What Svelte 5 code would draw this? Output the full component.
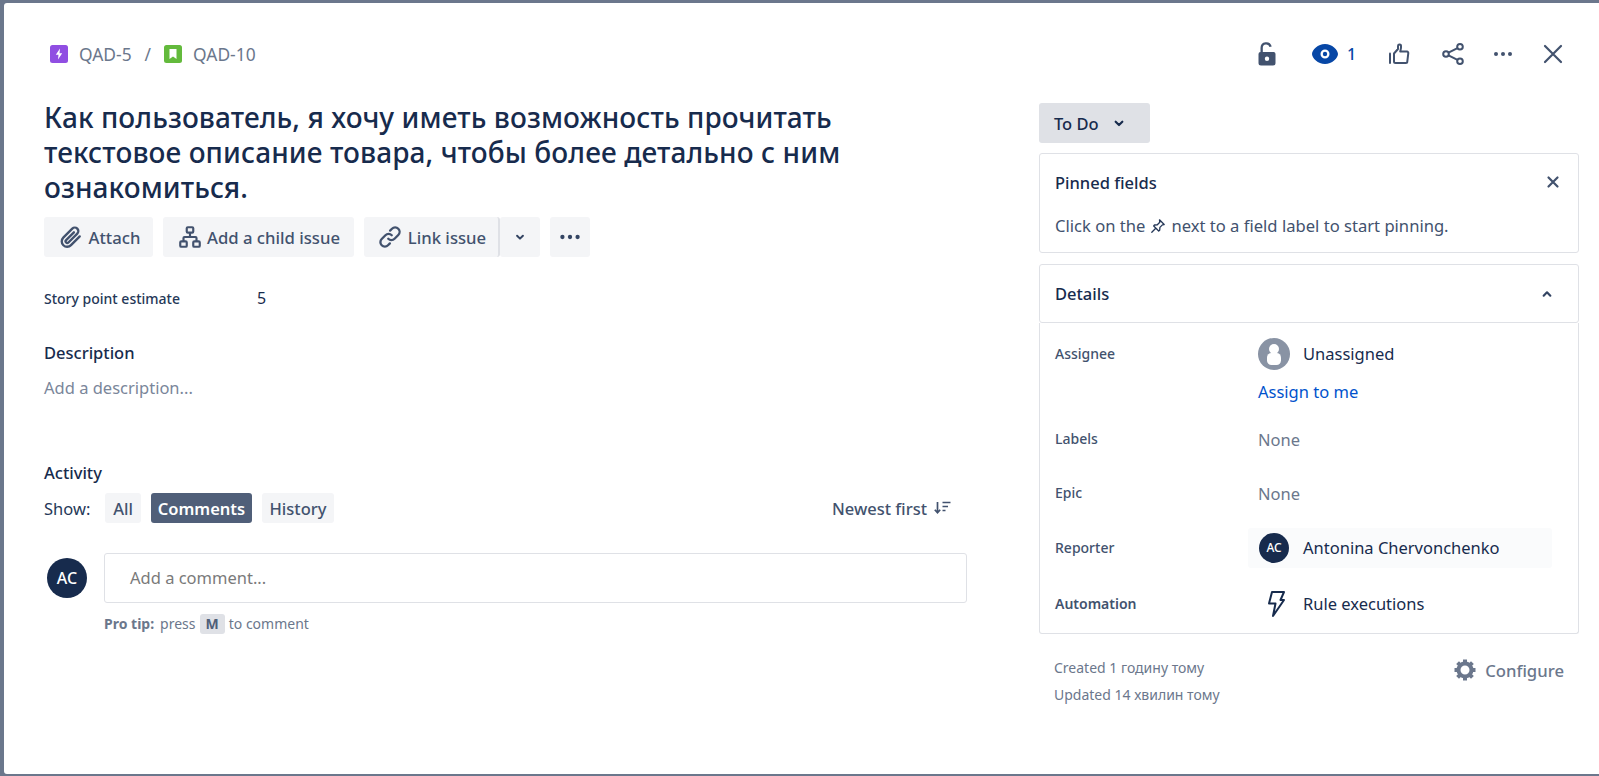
<script lang="ts">
	const actions = [
		{ label: 'Attach', icon: 'attach' },
		{ label: 'Add a child issue', icon: 'child' }
	];

	const filters = [
		{ label: 'All', active: false },
		{ label: 'Comments', active: true },
		{ label: 'History', active: false }
	];

	const gearTeeth = [0, 45, 90, 135, 180, 225, 270, 315];
</script>

<div class="backdrop">
	<div class="modal">
		<main class="left">
			<nav class="crumbs">
				<svg class="type" viewBox="0 0 18 18" width="18" height="18">
					<rect width="18" height="18" rx="2.5" fill="#904ee2" />
					<path d="M10 3.5 5.8 9.8h2.700L8 14.500l4.200-6.300H9.500z" fill="#fff" />
				</svg>
				<span>QAD-5</span>
				<span class="slash">/</span>
				<svg class="type" viewBox="0 0 18 18" width="18" height="18">
					<rect width="18" height="18" rx="2.5" fill="#63ba3c" />
					<path d="M5.500 4h7v10L9 11.400 5.500 14z" fill="#fff" />
				</svg>
				<span>QAD-10</span>
			</nav>

			<h1>Как пользователь, я хочу иметь возможность прочитать текстовое описание товара, чтобы более детально с ним ознакомиться.</h1>

			<div class="actions">
				{#each actions as action}
					<button class="btn {action.icon}">
						{#if action.icon === 'attach'}
							<svg viewBox="0 0 24 24" width="28" height="28" fill="none" stroke="#42526e" stroke-width="2" stroke-linecap="round">
								<path d="M19.500 11.500 12 19a4.600 4.600 0 0 1-6.600-6.500l7.700-7.700a3 3 0 0 1 4.300 4.300l-7.600 7.600a1.400 1.400 0 0 1-2-2L14.500 8" />
							</svg>
						{:else}
							<svg viewBox="0 0 24 24" width="26" height="26" fill="none" stroke="#42526e" stroke-width="2">
								<rect x="9" y="3" width="6" height="5" rx="1" />
								<rect x="3" y="16" width="6" height="5" rx="1" />
								<rect x="15" y="16" width="6" height="5" rx="1" />
								<path d="M12 8v4M6 16v-3a1 1 0 0 1 1-1h10a1 1 0 0 1 1 1v3" />
							</svg>
						{/if}
						{action.label}
					</button>
				{/each}
				<div class="split">
					<button class="btn link">
						<svg viewBox="0 0 24 24" width="28" height="28" fill="none" stroke="#42526e" stroke-width="2" stroke-linecap="round">
							<path d="M10.500 13.500a3.800 3.800 0 0 0 5.400 0l3.200-3.200a3.800 3.800 0 0 0-5.400-5.400l-1.600 1.600" />
							<path d="M13.500 10.500a3.800 3.800 0 0 0-5.400 0l-3.200 3.200a3.800 3.800 0 0 0 5.400 5.400l1.600-1.600" />
						</svg>
						Link issue
					</button>
					<button class="btn square">
						<svg viewBox="0 0 24 24" width="20" height="20" fill="none" stroke="#344563" stroke-width="2.400" stroke-linecap="round" stroke-linejoin="round">
							<path d="m8.500 10.500 3.500 3.500 3.500-3.500" />
						</svg>
					</button>
				</div>
				<button class="btn square more">
					<svg viewBox="0 0 24 24" width="26" height="26" fill="#344563">
						<circle cx="5" cy="12" r="2" /><circle cx="12" cy="12" r="2" /><circle cx="19" cy="12" r="2" />
					</svg>
				</button>
			</div>

			<div class="estimate">
				<span class="estimate-label">Story point estimate</span>
				<span class="estimate-value">5</span>
			</div>

			<h2 class="desc-head">Description</h2>
			<p class="placeholder">Add a description...</p>

			<h2 class="activity-head">Activity</h2>
			<div class="show">
				<span class="show-label">Show:</span>
				{#each filters as f}
					<button class="filter" class:active={f.active}>{f.label}</button>
				{/each}
				<span class="sort">
					Newest first
					<svg viewBox="0 0 18 16" width="18" height="16" fill="none" stroke="#42526e" stroke-width="1.700">
						<path d="M4.500 2v10.500M1.800 9.800l2.700 3 2.700-3" />
						<path d="M9.500 2.500h8M9.500 6.500h5.500M9.500 10.500h3" />
					</svg>
				</span>
			</div>

			<div class="comment">
				<div class="avatar">AC</div>
				<div class="comment-body">
					<div class="comment-input">Add a comment...</div>
					<p class="tip"><b>Pro tip:</b> press <kbd>M</kbd> to comment</p>
				</div>
			</div>
		</main>

		<aside class="right">
			<div class="toolbar">
				<svg class="t-lock" viewBox="0 0 20 26" width="20" height="26" fill="#42526e">
					<path fill-rule="evenodd" d="M3.500 11V7a5.700 5.700 0 0 1 11.200-1.500l-2.200.6A3.400 3.400 0 0 0 5.800 7v4H17a2 2 0 0 1 1.500 2v9a2.500 2.500 0 0 1-2.500 2.500H4A2.500 2.500 0 0 1 1.500 22v-9a2 2 0 0 1 2-2zM10 15.500a2.200 2.200 0 1 0 0 4.400 2.200 2.200 0 0 0 0-4.400z" />
				</svg>
				<span class="watch">
					<svg viewBox="0 0 26 20" width="26" height="20">
						<path fill-rule="evenodd" fill="#0747a6" d="M13 0c7 0 13 6 13 10s-6 10-13 10S0 14 0 10 6 0 13 0zm0 5.500a4.500 4.500 0 1 0 0 9 4.500 4.500 0 0 0 0-9z" />
						<circle cx="13" cy="10" r="2.200" fill="#0747a6" />
					</svg>
					<span>1</span>
				</span>
				<svg class="t-thumb" viewBox="0 0 24 24" width="24" height="24" fill="none" stroke="#42526e" stroke-width="2" stroke-linejoin="round" stroke-linecap="round">
					<path d="M3 11.500V21" />
					<path d="M7 11.500 11 7V4a1.500 1.500 0 0 1 3 .2c.3 2-.4 3.800-.8 5.300H20a1.500 1.500 0 0 1 1.300 1.700l-1 8.300a1.500 1.500 0 0 1-1.500 1.500H8.500A1.500 1.500 0 0 1 7 19.500z" />
				</svg>
				<svg class="t-share" viewBox="0 0 24 24" width="24" height="24" fill="none" stroke="#42526e" stroke-width="2">
					<circle cx="5" cy="12" r="2.800" /><circle cx="19" cy="4.800" r="2.800" /><circle cx="19" cy="19.200" r="2.800" />
					<path d="m7.500 10.700 9-4.600M7.500 13.300l9 4.600" />
				</svg>
				<svg class="t-dots" viewBox="0 0 24 24" width="24" height="24" fill="#42526e">
					<circle cx="5" cy="12" r="2" /><circle cx="12" cy="12" r="2" /><circle cx="19" cy="12" r="2" />
				</svg>
				<svg class="t-close" viewBox="0 0 24 24" width="24" height="24" fill="none" stroke="#42526e" stroke-width="2.200" stroke-linecap="round">
					<path d="m4 4 16 16M20 4 4 20" />
				</svg>
			</div>

			<button class="status">
				To Do
				<svg viewBox="0 0 24 24" width="20" height="20" fill="none" stroke="#172b4d" stroke-width="2.600" stroke-linecap="round" stroke-linejoin="round">
					<path d="m8 10.500 4 4 4-4" />
				</svg>
			</button>

			<section class="panel pinned">
				<div class="panel-head">
					<span>Pinned fields</span>
					<svg viewBox="0 0 14 14" width="14" height="14" fill="none" stroke="#42526e" stroke-width="2.200" stroke-linecap="round">
						<path d="m2.500 2.500 9 9M11.500 2.500l-9 9" />
					</svg>
				</div>
				<p class="pinned-text">
					Click on the
					<svg viewBox="0 0 16 16" width="16" height="16" fill="none" stroke="#253858" stroke-width="1.300" stroke-linejoin="round" stroke-linecap="round">
						<path d="m9.500 1.800 4.700 4.700-1.800.4-2.500 2.500-.2 2.800-1 .8-5-5 .8-1 2.800-.2 2.500-2.500zM5.500 10.500 1.800 14.200" />
					</svg>
					next to a field label to start pinning.
				</p>
			</section>

			<section class="details">
				<div class="details-head">
					<span>Details</span>
					<svg viewBox="0 0 24 24" width="20" height="20" fill="none" stroke="#344563" stroke-width="2.600" stroke-linecap="round" stroke-linejoin="round">
						<path d="m8 14 4-4 4 4" />
					</svg>
				</div>
				<div class="details-body">
					<div class="row assignee">
						<span class="label">Assignee</span>
						<div class="value">
							<div class="person">
								<svg viewBox="0 0 32 32" width="32" height="32">
									<circle cx="16" cy="16" r="16" fill="#8993a4" />
									<circle cx="16" cy="11" r="5" fill="#fff" />
									<rect x="9" y="15" width="14" height="12" rx="4.500" fill="#fff" />
								</svg>
								<span>Unassigned</span>
							</div>
							<span class="assign-me">Assign to me</span>
						</div>
					</div>
					<div class="row labels">
						<span class="label">Labels</span>
						<span class="none">None</span>
					</div>
					<div class="row epic">
						<span class="label">Epic</span>
						<span class="none">None</span>
					</div>
					<div class="row reporter">
						<span class="label">Reporter</span>
						<div class="person reporter-chip">
							<div class="avatar small">AC</div>
							<span>Antonina Chervonchenko</span>
						</div>
					</div>
					<div class="row automation">
						<span class="label bold">Automation</span>
						<div class="person">
							<svg class="bolt" viewBox="0 0 24 32" width="32" height="32" fill="none" stroke="#172b4d" stroke-width="2" stroke-linejoin="round">
								<path d="M8 4h12l-3.500 8H20L9 28l2.500-12.500H5z" />
							</svg>
							<span>Rule executions</span>
						</div>
					</div>
				</div>
			</section>

			<div class="meta">
				<div class="dates">
					<span>Created 1 годину тому</span>
					<span>Updated 14 хвилин тому</span>
				</div>
				<div class="configure">
					<svg viewBox="0 0 24 24" width="24" height="24" fill="none" stroke="#6b778c">
						<circle cx="12" cy="12" r="6.500" stroke-width="4" />
						{#each gearTeeth as deg}
							<path d="M12 1.500v4" stroke-width="4" transform="rotate({deg} 12 12)" />
						{/each}
					</svg>
					Configure
				</div>
			</div>
		</aside>
	</div>
</div>

<style>
	:global(body) {
		margin: 0;
		background: #6b778c;
		font-family: "Noto Sans", sans-serif;
		color: #172b4d;
	}

	.backdrop {
		height: 776px;
		box-sizing: border-box;
		padding: 3px 0 2px 4px;
		overflow: hidden;
		background: #6b778c;
	}

	.modal {
		display: flex;
		height: 100%;
		background: #fff;
		border-radius: 3px 0 0 3px;
	}

	.left {
		width: 924px;
		padding-left: 40px;
		flex-shrink: 0;
	}

	.crumbs {
		display: flex;
		align-items: center;
		height: 18px;
		margin: 42px 0 0 6px;
		font-size: 17.4px;
		color: #6b778c;
	}

	.crumbs .type {
		margin-right: 11px;
	}

	.slash {
		margin: 0 13px;
	}

	h1 {
		width: 830px;
		margin: 37px 0 0;
		font-size: 28px;
		letter-spacing: 0.1px;
		line-height: 35px;
		font-weight: 500;
		color: #172b4d;
	}

	.actions {
		display: flex;
		gap: 10px;
		margin-top: 12px;
	}

	.btn {
		display: flex;
		align-items: center;
		justify-content: center;
		gap: 4px;
		box-sizing: border-box;
		height: 40px;
		padding: 0;
		border: none;
		border-radius: 3px;
		background: #f4f5f7;
		color: #42526e;
		font: 500 16.7px "Noto Sans", sans-serif;
	}

	.btn.attach { width: 109px; }
	.btn.child { width: 191px; }

	.split {
		display: flex;
		gap: 0;
	}

	.btn.link {
		width: 136px;
		border-right: 2px solid #dfe1e6;
	}

	.btn.square {
		width: 40px;
	}

	.estimate {
		display: flex;
		align-items: center;
		margin-top: 31px;
		height: 20px;
		font-size: 14px;
		font-weight: 500;
		color: #253858;
	}

	.estimate-label {
		width: 213px;
	}

	.estimate-value {
		font-size: 16px;
		font-weight: 400;
		color: #172b4d;
	}

	h2 {
		margin: 0;
		font-size: 16.5px;
		line-height: 22px;
		font-weight: 500;
		color: #172b4d;
	}

	.desc-head {
		margin-top: 34px;
	}

	.placeholder {
		margin: 13px 0 0;
		font-size: 16.5px;
		line-height: 22px;
		color: #7a869a;
	}

	.activity-head {
		margin-top: 63px;
	}

	.show {
		display: flex;
		align-items: center;
		gap: 10px;
		width: 907px;
		margin-top: 9px;
	}

	.show-label {
		width: 51px;
		font-size: 16.5px;
		color: #253858;
	}

	.filter {
		height: 30px;
		padding: 0;
		border: none;
		border-radius: 3px;
		background: #f4f5f7;
		color: #42526e;
		font: 500 16.5px "Noto Sans", sans-serif;
	}

	.filter:nth-of-type(1) { width: 36px; }
	.filter:nth-of-type(2) { width: 101px; }
	.filter:nth-of-type(3) { width: 72px; }

	.filter.active {
		background: #505f79;
		color: #fff;
		font-weight: 600;
	}

	.sort {
		display: flex;
		align-items: center;
		gap: 6px;
		margin-left: auto;
		font-size: 16.5px;
		font-weight: 500;
		color: #42526e;
	}

	.comment {
		display: flex;
		gap: 17px;
		margin-top: 30px;
		padding-left: 3px;
	}

	.avatar {
		display: flex;
		align-items: center;
		justify-content: center;
		flex-shrink: 0;
		width: 40px;
		height: 40px;
		margin-top: 5px;
		border-radius: 50%;
		background: #172b4d;
		color: #fff;
		font-size: 16px;
		font-weight: 500;
	}

	.avatar.small {
		width: 30px;
		height: 30px;
		margin: 0 1px;
		font-size: 12px;
	}

	.comment-body {
		width: 863px;
	}

	.comment-input {
		box-sizing: border-box;
		height: 50px;
		padding: 0 25px;
		border: 1px solid #dfe1e6;
		border-radius: 3px;
		line-height: 48px;
		font-size: 16.5px;
		color: #7a7a7a;
	}

	.tip {
		display: flex;
		align-items: center;
		gap: 4px;
		margin: 10px 0 0;
		font-size: 14px;
		line-height: 22px;
		color: #6b778c;
	}

	.tip b {
		margin-right: 2px;
	}

	kbd {
		padding: 0 6px;
		border-radius: 3px;
		background: #dfe1e6;
		color: #505f79;
		font: 700 14px/20px "Noto Sans", sans-serif;
	}

	.right {
		width: 540px;
		margin-left: 71px;
	}

	.toolbar {
		display: flex;
		align-items: center;
		height: 30px;
		margin-top: 36px;
		padding-left: 218px;
	}

	.watch {
		display: flex;
		align-items: center;
		gap: 9px;
		margin-left: 35px;
		color: #0747a6;
		font-size: 16px;
		font-weight: 500;
	}

	.t-thumb { margin-left: 31px; }
	.t-share { margin-left: 30px; }
	.t-dots { margin-left: 26px; }
	.t-close { margin-left: 26px; }

	.status {
		display: flex;
		align-items: center;
		gap: 10px;
		width: 111px;
		height: 40px;
		margin-top: 34px;
		padding: 0 15px;
		border: none;
		border-radius: 3px;
		background: #dfe1e6;
		color: #172b4d;
		font: 500 16.5px "Noto Sans", sans-serif;
	}

	.panel {
		box-sizing: border-box;
		height: 100px;
		margin-top: 10px;
		padding: 0 18px 0 15px;
		border: 1px solid #dfe1e6;
		border-radius: 3px;
	}

	.panel-head {
		display: flex;
		align-items: center;
		justify-content: space-between;
		height: 56px;
		font-size: 16.5px;
		font-weight: 500;
	}

	.pinned-text {
		display: flex;
		align-items: center;
		gap: 5px;
		margin: 5px 0 0;
		font-size: 16.6px;
		line-height: 22px;
		color: #42526e;
	}

	.details {
		margin-top: 11px;
	}

	.details-head {
		display: flex;
		align-items: center;
		justify-content: space-between;
		box-sizing: border-box;
		height: 59px;
		padding: 0 21px 0 15px;
		border: 1px solid #dfe1e6;
		border-radius: 3px;
		font-size: 16.5px;
		font-weight: 500;
	}

	.details-body {
		box-sizing: border-box;
		height: 311px;
		padding: 0 15px;
		border: 1px solid #dfe1e6;
		border-top: none;
		border-radius: 0 0 3px 3px;
	}

	.row {
		display: flex;
		align-items: flex-start;
		font-size: 16.5px;
		line-height: 22px;
	}

	.label {
		flex-shrink: 0;
		width: 203px;
		font-size: 14px;
		line-height: 18px;
		font-weight: 500;
		color: #42526e;
	}

	.person {
		display: flex;
		align-items: center;
		gap: 13px;
		color: #172b4d;
	}

	.value {
		display: flex;
		flex-direction: column;
	}

	.assignee {
		padding-top: 15px;
	}

	.assignee .label {
		margin-top: 7px;
	}

	.assign-me {
		margin-top: 11px;
		color: #0052cc;
	}

	.labels {
		margin-top: 26px;
	}

	.labels .label,
	.epic .label {
		margin-top: 1px;
	}

	.epic {
		margin-top: 32px;
	}

	.none {
		color: #6b778c;
	}

	.reporter {
		margin-top: 23px;
		align-items: center;
	}

	.reporter-chip {
		width: 304px;
		height: 40px;
		margin-left: -10px;
		padding-left: 10px;
		border-radius: 3px;
		background: #fafbfc;
		box-sizing: border-box;
	}

	.automation {
		margin-top: 20px;
		align-items: center;
	}

	.automation .person {
		gap: 11px;
		margin-left: 2px;
	}

	.bold {
		font-weight: 600;
	}

	.bolt {
		flex-shrink: 0;
	}

	.meta {
		display: flex;
		justify-content: space-between;
		margin-top: 24px;
		padding: 0 15px;
	}

	.dates {
		display: flex;
		flex-direction: column;
		gap: 7px;
		font-size: 14px;
		line-height: 20px;
		color: #6b778c;
	}

	.configure {
		display: flex;
		align-items: center;
		gap: 8px;
		height: 24px;
		font-size: 16.7px;
		font-weight: 500;
		color: #6b778c;
	}
</style>
